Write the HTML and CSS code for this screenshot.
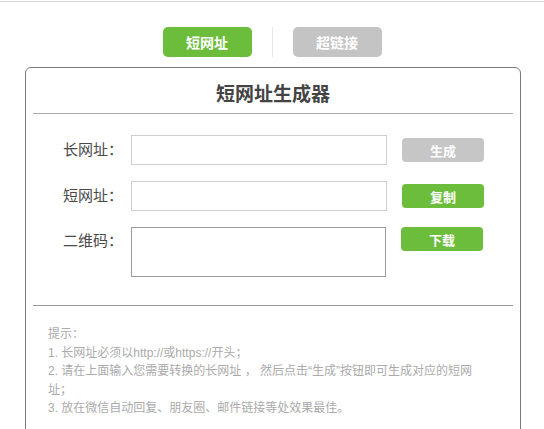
FILE: index.html
```
<!DOCTYPE html>
<html lang="zh-CN">
<head>
<meta charset="UTF-8" />
<meta name="viewport" content="width=device-width, initial-scale=1.0" />
<title>短网址生成器</title>
<link rel="stylesheet" href="styles.css">
</head>
<body>
<div class="page">
<div class="tabs">
<button class="tab active">短网址</button>
<span class="tab-sep"></span>
<button class="tab">超链接</button>
</div>
<div class="card">
<h1 class="title">短网址生成器</h1>
<div class="form">
<div class="row">
<label class="label">长网址：</label>
<input class="field" type="text" />
<button class="btn gray">生成</button>
</div>
<div class="row">
<label class="label">短网址：</label>
<input class="field" type="text" />
<button class="btn green">复制</button>
</div>
<div class="row top">
<label class="label">二维码：</label>
<div class="qr"></div>
<button class="btn green">下载</button>
</div>
</div>
<div class="tips">
<p>提示：</p>
<p>1. 长网址必须以http://或https://开头；</p>
<p>2. 请在上面输入您需要转换的长网址 ， 然后点击“生成”按钮即可生成对应的短网址；</p>
<p>3. 放在微信自动回复、朋友圈、邮件链接等处效果最佳。</p>
</div>
</div>
</div>
</body>
</html>
```
FILE: styles.css
```
* {
margin: 0;
padding: 0;
box-sizing: border-box;
}
body {
background: #fff;
font-family: "Liberation Sans", "Noto Sans CJK SC", sans-serif;
color: #555;
padding-top: 1px;
}
.page {
border-top: 1px solid #d6d6d6;
padding: 25px 23px 0 25px;
}
.tabs {
display: flex;
justify-content: center;
align-items: center;
gap: 20px;
margin-left: -2px;
}
.tab {
width: 89px;
height: 30px;
border: none;
border-radius: 5px;
background: #c4c4c4;
color: #fff;
font-family: inherit;
font-size: 14px;
font-weight: bold;
}
.tab.active {
background: #6dbd3d;
}
.tab-sep {
width: 1px;
height: 30px;
background: #e6e6e6;
}
.card {
margin-top: 10px;
border: 1px solid #7a7a7a;
border-radius: 6px;
padding: 0 7px 30px;
}
.title {
font-size: 19px;
font-weight: bold;
color: #444;
text-align: center;
line-height: 24px;
padding: 15px 0 6px;
border-bottom: 1px solid #aaa;
}
.form {
padding: 21px 0 28px 30px;
border-bottom: 1px solid #999;
display: flex;
flex-direction: column;
gap: 16px;
}
.row {
display: flex;
align-items: center;
}
.row.top {
align-items: flex-start;
}
.label {
width: 68px;
font-size: 15px;
line-height: 28px;
color: #4a4a4a;
}
.field {
width: 256px;
height: 30px;
border: 1px solid #cfcfcf;
margin-right: 15px;
}
.qr {
width: 255px;
height: 50px;
border: 1px solid #9a9a9a;
margin-right: 15px;
}
.btn {
width: 82px;
height: 24px;
border: none;
border-radius: 4px;
color: #fff;
font-family: inherit;
font-size: 13px;
font-weight: bold;
}
.btn.gray {
background: #c6c6c6;
}
.btn.green {
background: #6dbd3d;
}
.tips {
padding: 19px 0 0 15px;
max-width: 448px;
font-size: 12px;
line-height: 18.5px;
color: #aaa;
}
```
